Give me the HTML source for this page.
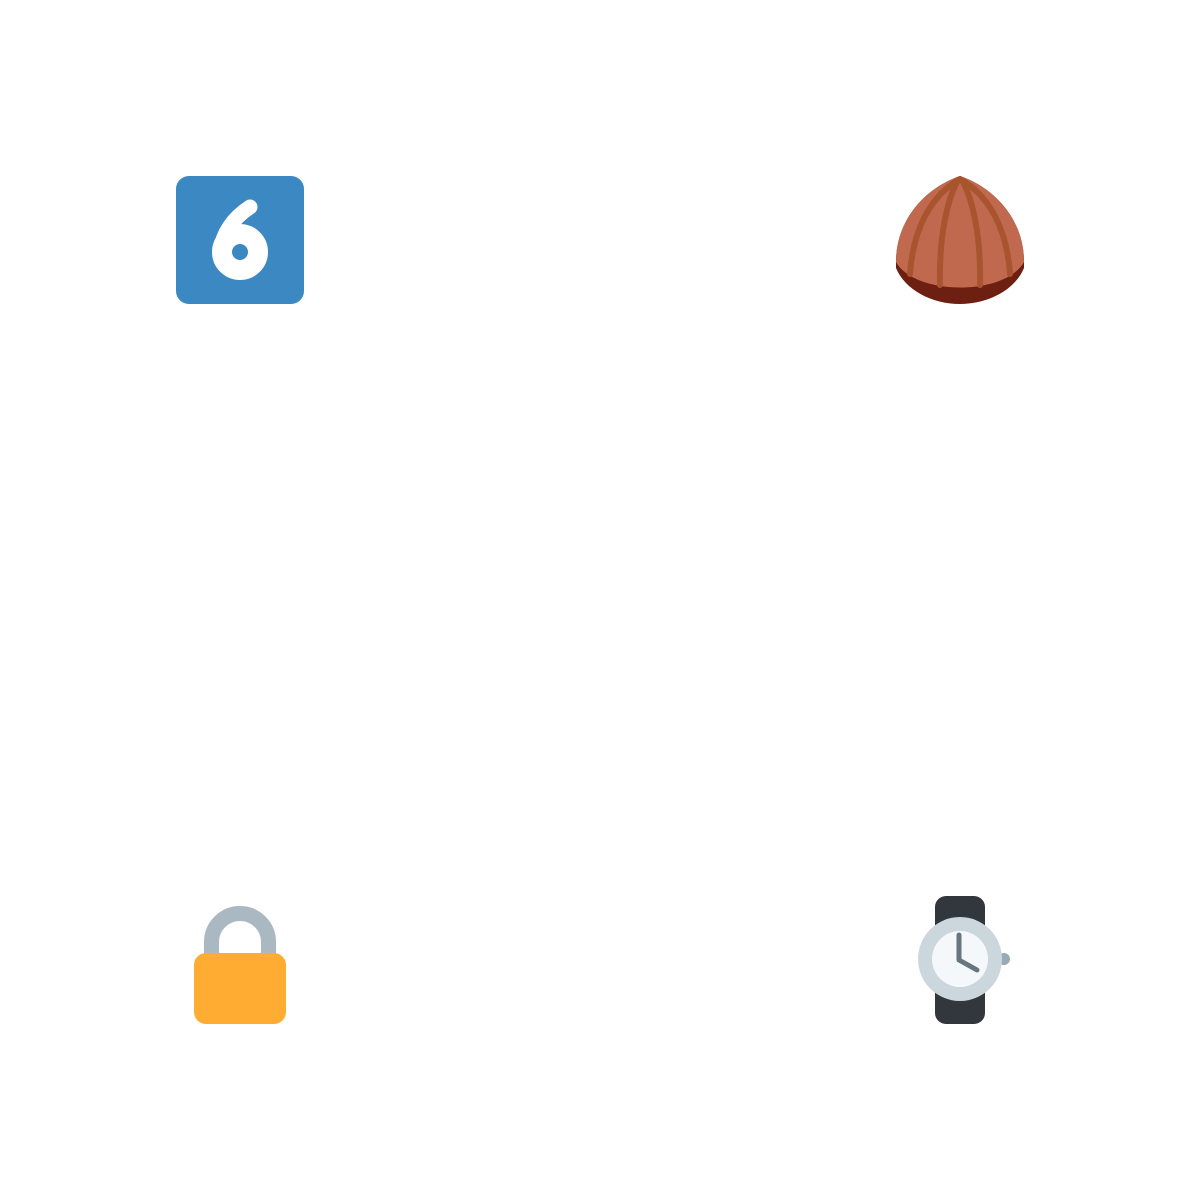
<!DOCTYPE html>
<html><head><style>html,body{margin:0;background:#fff;width:1200px;height:1200px;overflow:hidden}</style></head><body>
<svg width="1200" height="1200" viewBox="0 0 1200 1200" xmlns="http://www.w3.org/2000/svg">
<!-- keycap 6 -->
<rect x="176" y="176" width="128" height="128" rx="13" fill="#3B88C3"/>
<path d="M250 207 Q224 224 220 252" fill="none" stroke="#fff" stroke-width="15" stroke-linecap="round"/>
<circle cx="240" cy="252" r="18" fill="none" stroke="#fff" stroke-width="20"/>
<!-- chestnut -->
<path d="M960 176 C925 188 896 220 896 262 L896 268 C905 290 932 304 960 304 C988 304 1015 290 1024 268 L1024 262 C1024 220 995 188 960 176 Z" fill="#6D1F11"/>
<path d="M960 176 C925 188 896 220 896 262 C915 296 1005 296 1024 262 C1024 220 995 188 960 176 Z" fill="#C1694F"/>
<g fill="none" stroke="#A8552F" stroke-width="6" stroke-linecap="round">
<path d="M960 179 C930 196 913 230 910 274"/>
<path d="M958 180 C946 202 939 240 940 285"/>
<path d="M962 180 C974 202 981 240 980 285"/>
<path d="M960 179 C990 196 1007 230 1010 274"/>
</g>
<!-- lock -->
<path d="M211.5 960 V942 A28.5 28.5 0 0 1 268.5 942 V960" fill="none" stroke="#AAB8C2" stroke-width="15"/>
<rect x="194" y="953" width="92" height="71" rx="12" fill="#FFAC33"/>
<!-- watch -->
<rect x="935" y="896" width="50" height="128" rx="11" fill="#31373D"/>
<circle cx="1004" cy="959" r="6" fill="#99AAB5"/>
<circle cx="960" cy="959" r="42" fill="#CCD6DD"/>
<circle cx="960" cy="959" r="28" fill="#F5F8FA"/>
<path d="M959 935 V960 L977 970" fill="none" stroke="#67757F" stroke-width="5" stroke-linecap="round" stroke-linejoin="round"/>
</svg>
</body></html>
